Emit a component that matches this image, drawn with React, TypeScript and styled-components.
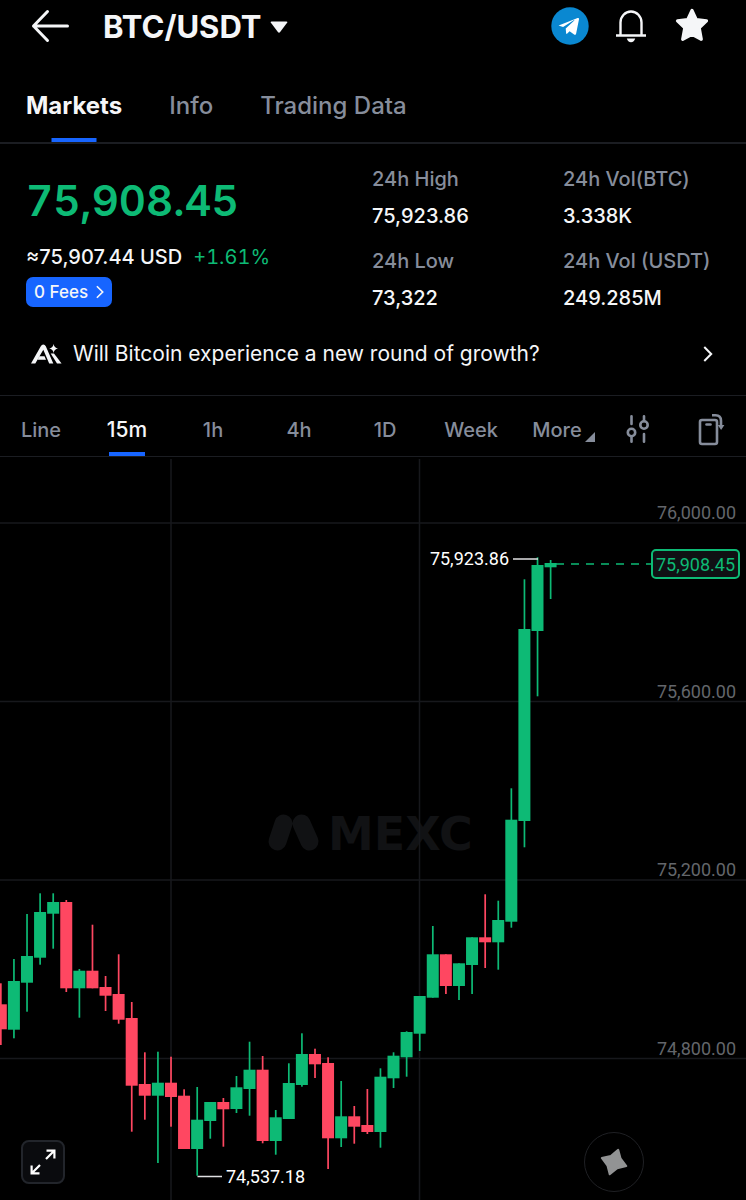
import React from 'react';
import styled, { createGlobalStyle, css } from 'styled-components';

const color = {
  text: '#f5f6f8',
  muted: '#868d9b',
  axis: '#63666b',
  up: '#0dba75',
  down: '#ff4761',
  blue: '#1765ff',
  line: '#1b1d22',
};

const GlobalStyle = createGlobalStyle`
  * { box-sizing: border-box; }
  body {
    margin: 0;
    background: #000;
    color: ${color.text};
    font-family: Inter, "Liberation Sans", sans-serif;
  }
  button { font: inherit; color: inherit; background: none; border: 0; padding: 0; cursor: pointer; }
  a { color: inherit; text-decoration: none; }
  svg { display: block; }
`;

const Page = styled.main`
  width: 100%;
  overflow: hidden;
`;

const Header = styled.header`
  display: flex;
  align-items: center;
  height: 52px;
  padding: 0 35px 0 31px;
`;

const PairButton = styled.button`
  display: flex;
  align-items: center;
  gap: 8px;
  margin-left: 33px;
  padding-top: 2px;
`;

const PairName = styled.h1`
  margin: 0;
  font-size: 31px;
  line-height: 40px;
  font-weight: 700;
`;

const HeaderActions = styled.div`
  display: flex;
  align-items: center;
  gap: 26px;
  margin-left: auto;
`;

const Tabs = styled.nav`
  display: flex;
  gap: 47px;
  height: 92px;
  padding: 0 26px;
  border-bottom: 2px solid ${color.line};
`;

const underline = css<{ $width: number }>`
  &::after {
    content: '';
    position: absolute;
    left: 50%;
    bottom: 0;
    width: ${(p) => p.$width}px;
    height: 4px;
    transform: translateX(-50%);
    background: ${color.blue};
  }
`;

const Tab = styled.button<{ $active?: boolean; $width: number }>`
  position: relative;
  padding-bottom: 14px;
  padding-top: 32px;
  font-size: 24px;
  line-height: 44px;
  white-space: nowrap;
  font-weight: ${(p) => (p.$active ? 700 : 500)};
  color: ${(p) => (p.$active ? color.text : color.muted)};
  ${(p) => p.$active && underline}
`;

const Summary = styled.section`
  border-bottom: 1px solid ${color.line};
`;

const Figures = styled.div`
  display: grid;
  grid-template-columns: 346fr 348fr;
  padding: 23px 26px 0;
`;

const Price = styled.div`
  margin-top: 7px;
  font-size: 42px;
  line-height: 54px;
  font-weight: 600;
  font-variant-numeric: tabular-nums;
  color: ${color.up};
`;

const Converted = styled.div`
  display: flex;
  gap: 11px;
  margin-top: 17px;
  font-size: 20px;
  line-height: 24px;
  font-weight: 500;
  white-space: nowrap;
`;

const Change = styled.span`
  color: ${color.up};
  font-weight: 400;
  font-variant-numeric: tabular-nums;
`;

const FeesButton = styled.button`
  display: flex;
  align-items: center;
  gap: 8px;
  height: 30px;
  margin-top: 8px;
  padding: 0 8px;
  border-radius: 7px;
  background: ${color.blue};
  font-size: 17px;
  line-height: 24px;
  font-weight: 500;
`;

const Stats = styled.dl`
  display: grid;
  grid-template-columns: 191fr 157fr;
  row-gap: 21px;
  margin: 0;
`;

const Stat = styled.div`
  font-size: 20px;
  line-height: 24px;
  font-weight: 500;
  white-space: nowrap;
`;

const StatLabel = styled.dt`
  color: ${color.muted};
  margin-bottom: 13px;
`;

const StatValue = styled.dd`
  margin: 0;
`;

const PromptLink = styled.a`
  display: flex;
  align-items: center;
  gap: 11px;
  height: 48px;
  margin: 20px 0 17px;
  padding: 0 33px 0 31px;
  font-size: 21px;
  line-height: 24px;

  svg:last-child { margin-left: auto; }
`;

const Toolbar = styled.div`
  display: grid;
  grid-template-columns: repeat(7, 86fr) 76fr 70fr;
  height: 61px;
  margin-left: -2px;
  border-bottom: 1px solid ${color.line};
`;

const Period = styled.button<{ $active?: boolean; $width: number }>`
  position: relative;
  padding-bottom: 4px;
  padding-top: 12px;
  font-size: ${(p) => (p.$active ? 21 : 20)}px;
  line-height: 24px;
  font-weight: 500;
  color: ${(p) => (p.$active ? color.text : color.muted)};
  ${(p) => p.$active && underline}
`;

const MoreMark = styled.svg`
  position: absolute;
  right: 5px;
  bottom: 14px;
`;

const ToolButton = styled.button`
  display: grid;
  place-items: center;
  padding-top: 6px;
  color: ${color.muted};
`;

const ChartArea = styled.section`
  position: relative;
  padding-top: 1px;
`;

const ChartSvg = styled.svg`
  width: 100%;
  height: auto;
  font-family: Roboto, "Liberation Sans", sans-serif;
  font-size: 18px;
`;

const ExpandButton = styled.button`
  position: absolute;
  left: 21px;
  bottom: 16px;
  display: grid;
  place-items: center;
  width: 44px;
  height: 44px;
  border: 2px solid #22252b;
  border-radius: 8px;
  background: #0a0b0e;
`;

const AssistButton = styled.button`
  position: absolute;
  right: 102px;
  bottom: 8px;
  display: grid;
  place-items: center;
  width: 60px;
  height: 60px;
  border: 1px solid #1f2024;
  border-radius: 50%;
  background: #000;
`;

const BackIcon = () => (
  <svg width="39" height="36" viewBox="0 0 39 36" fill="none" stroke={color.text} strokeWidth="3" strokeLinecap="round" strokeLinejoin="round">
    <path d="M16.500 3.500 2.500 18 16.500 32.500M2.500 18H36.500" />
  </svg>
);

const CaretIcon = () => (
  <svg width="18" height="12" viewBox="0 0 18 12">
    <path d="M1.500.5h15q1.500 0 .6 1.200l-7 9.300q-1.100 1.300-2.200 0l-7-9.300Q0 .5 1.500.5Z" fill={color.text} />
  </svg>
);

const TelegramIcon = () => (
  <svg width="38" height="38" viewBox="0 0 38 38">
    <circle cx="19" cy="19" r="18.700" fill="#0a88d1" />
    <path d="M8.300 18.200 26.600 11q1.600-.5 1.400 1.200l-2.900 14.600q-.5 1.800-2 .8l-4.500-3.300-2.300 2.300q-1 .8-1.200-.6l-.4-4.600 8.600-7.900q.4-.7-.6-.3l-10.600 6.700-3.900-1.200q-1.200-.3.100-.5Z" fill="#fff" />
  </svg>
);

const BellIcon = () => (
  <svg width="32" height="36" viewBox="0 0 32 36" fill="none" stroke={color.text} strokeWidth="2.400">
    <path d="M5.500 27V14.500a10.500 11 0 0 1 21 0V27M1 27.500h30" />
    <path d="M11.800 30.600h8.400q-1 3.600-4.200 3.600t-4.200-3.600Z" fill={color.text} stroke="none" />
  </svg>
);

const StarIcon = () => (
  <svg width="38" height="38" viewBox="-2 -1 38 38">
    <path d="M17 2.500 21.300 11.600 31.500 12.900 24.200 19.900 26.300 31.300 17 26.300 7.700 31.300 9.800 19.900 2.500 12.900 12.700 11.600Z" fill={color.text} stroke={color.text} strokeWidth="3.200" strokeLinejoin="round" />
  </svg>
);

const ChevronIcon = ({ size }: { size: number }) => (
  <svg width={Math.round(size * 0.6)} height={size} viewBox="0 0 9 15" fill="none" stroke={color.text} strokeWidth="1.900">
    <path d="M1 1 7.500 7.500 1 14" />
  </svg>
);

const AiIcon = () => (
  <svg width="31" height="20" viewBox="0 0 31 20" fill={color.text}>
    <path d="M0 19.500 9.800 2.200Q10.700.6 12.300.6T14.800 2.200L22.300 19.500H18.200L12.300 5.800 4.300 19.500ZM8.600 12.200H13.500L15 15.700H6.600Z" />
    <path d="M19.700 9.600H23L30.600 19.500H26Z" />
    <path d="M22.600 0Q23.200 3.800 27 4.500 23.200 5.200 22.600 9 22 5.200 18.200 4.500 22 3.800 22.600 0Z" />
  </svg>
);

const SlidersIcon = () => (
  <svg width="24" height="30" viewBox="0 0 24 30" fill="none" stroke="currentColor" strokeWidth="2.600" strokeLinecap="round">
    <circle cx="5.500" cy="18.500" r="3.700" />
    <circle cx="18" cy="11" r="3.700" />
    <path d="M5.500 2.200V10M5.500 22.500V27.800M18 2.200V7M18 20V27.800" />
  </svg>
);

const RotateIcon = () => (
  <svg width="27" height="33" viewBox="0 0 27 33" fill="none" stroke="currentColor" strokeWidth="2.600">
    <rect x="2" y="7" width="17" height="24" rx="2" />
    <path d="M8.500 11.500h4" strokeLinecap="round" />
    <path d="M14 2.200h3.500q5.500 0 5.500 5.500V13" />
    <path d="M19.800 12h6.600L23.100 17Z" fill="currentColor" stroke="none" />
  </svg>
);

const ExpandIcon = () => (
  <svg width="26" height="26" viewBox="0 0 26 26" fill="none" stroke="#fff" strokeWidth="2.200">
    <path d="M16 10 24.200 1.800M16.500 1.600H24.400V9.500M10 16 1.800 24.200M1.600 16.500V24.400H9.500" />
  </svg>
);

const CompassStarIcon = () => (
  <svg width="30" height="30" viewBox="0 0 30 30">
    <path d="M19.200 2.800 21.500 11.300 27.300 19 18.200 21.200 10.700 27.300 8.500 18.700 2.800 11 11.800 9Z" fill="#929394" stroke="#929394" strokeWidth="2" strokeLinejoin="round" />
  </svg>
);

type Candle = [up: 0 | 1, top: number, bottom: number, high: number, low: number];

const candles: Candle[] = [
  [0, 1004.3, 1029.3, 983.3, 1045],
  [1, 981, 1029.7, 959, 1038.3],
  [1, 956, 982.7, 914, 1011.7],
  [1, 912, 957.7, 893.3, 964.7],
  [1, 902, 913.7, 893.3, 948.7],
  [0, 902, 988.3, 900, 992],
  [1, 970.7, 988.3, 969, 1017.7],
  [0, 970.7, 988.3, 924.7, 988.3],
  [0, 987, 995.7, 976, 1011],
  [0, 994, 1019.7, 954.3, 1023.7],
  [0, 1018, 1085.7, 1002, 1131.7],
  [0, 1084, 1095.7, 1052.3, 1119.7],
  [1, 1082.7, 1095.7, 1051.7, 1163],
  [0, 1082.7, 1097, 1056.7, 1126.7],
  [0, 1095.7, 1149, 1089.3, 1149],
  [1, 1119.7, 1149, 1087, 1175.7],
  [1, 1102, 1121, 1102, 1138.7],
  [0, 1102, 1109.3, 1098, 1146.7],
  [1, 1087.3, 1109, 1076, 1113],
  [1, 1069.7, 1089, 1041.7, 1115.7],
  [0, 1069.7, 1141, 1056, 1143.3],
  [1, 1117.3, 1141, 1110, 1154.7],
  [1, 1083, 1119, 1063.3, 1119],
  [1, 1054, 1085, 1033.3, 1086.7],
  [0, 1054, 1064.3, 1048.7, 1078],
  [0, 1063, 1138.3, 1057.3, 1169],
  [1, 1116.3, 1138.3, 1081, 1147],
  [0, 1116.3, 1126.7, 1106, 1143.7],
  [0, 1125, 1132, 1089, 1134],
  [1, 1076.7, 1132, 1068.3, 1147.7],
  [1, 1055.7, 1078.3, 1052.3, 1088],
  [1, 1032, 1057.3, 1031.3, 1076.7],
  [1, 996, 1033.7, 996, 1051],
  [1, 954.3, 997.7, 926, 997.7],
  [0, 954.3, 986, 954.3, 994],
  [1, 963.3, 986, 963.3, 1000],
  [1, 937.3, 965, 937.3, 994],
  [0, 937.3, 942.3, 894.3, 968],
  [1, 920, 942.3, 900.7, 969.7],
  [1, 819.7, 921.7, 788.3, 927.7],
  [1, 629, 821, 579.3, 847.3],
  [1, 565, 631, 557.3, 696.3],
  [1, 563, 567.3, 560, 599],
];

const gridRows = [
  { y: 523, label: '76,000.00' },
  { y: 701.5, label: '75,600.00' },
  { y: 880, label: '75,200.00' },
  { y: 1058.5, label: '74,800.00' },
];

const gridColumns = [171, 419.5];

const periods = ['Line', '15m', '1h', '4h', '1D', 'Week'];

const stats = [
  ['24h High', '75,923.86'],
  ['24h Vol(BTC)', '3.338K'],
  ['24h Low', '73,322'],
  ['24h Vol (USDT)', '249.285M'],
];

const CandleChart = () => (
  <ChartSvg viewBox="0 458 746 742" role="img" aria-label="BTC/USDT 15 minute candles">
    <g fill="#111214">
      <path d="M283.500 823.500 277.500 841.500M301.500 823.500 309.500 841.500" stroke="#111214" strokeWidth="18" strokeLinecap="round" />
      <text x="328" y="850" fontFamily="DejaVu Sans" fontWeight="700" fontSize="46">MEXC</text>
    </g>
    <g stroke="#17181c" strokeWidth="1.500">
      {gridRows.map((row) => <line key={row.y} x1="0" x2="746" y1={row.y} y2={row.y} />)}
      {gridColumns.map((x) => <line key={x} x1={x} x2={x} y1="459" y2="1200" />)}
    </g>
    <g fill={color.axis} textAnchor="end">
      {gridRows.map((row) => <text key={row.y} x="736" y={row.y - 4}>{row.label}</text>)}
    </g>
    {candles.map(([up, top, bottom, high, low], i) => {
      const x = 0.8 + i * 13.09;
      return (
        <g key={i} fill={up ? color.up : color.down}>
          <rect x={x - 0.8} y={high} width="1.700" height={low - high} />
          <rect x={x - 6} y={top} width="12" height={bottom - top} />
        </g>
      );
    })}
    <path d="M513 559H538M197.500 1176.500H222" stroke="#dfe0e2" strokeWidth="1.600" />
    <g fill="#fff">
      <text x="509" y="565" textAnchor="end">75,923.86</text>
      <text x="226" y="1183">74,537.18</text>
    </g>
    <path d="M556 564H651" stroke={color.up} strokeWidth="1.500" strokeDasharray="8 7" />
    <rect x="652" y="550" width="87" height="28" rx="4" fill="#101114" stroke={color.up} strokeWidth="2" />
    <text x="695.500" y="571" textAnchor="middle" fill={color.up}>75,908.45</text>
  </ChartSvg>
);

export default function App() {
  return (
    <Page>
      <GlobalStyle />
      <Header>
        <button aria-label="Back"><BackIcon /></button>
        <PairButton>
          <PairName>BTC/USDT</PairName>
          <CaretIcon />
        </PairButton>
        <HeaderActions>
          <button aria-label="Telegram"><TelegramIcon /></button>
          <button aria-label="Price alerts"><BellIcon /></button>
          <button aria-label="Favorite"><StarIcon /></button>
        </HeaderActions>
      </Header>
      <Tabs>
        <Tab $active $width={45}>Markets</Tab>
        <Tab $width={45}>Info</Tab>
        <Tab $width={45}>Trading Data</Tab>
      </Tabs>
      <Summary>
        <Figures>
          <div>
            <Price>75,908.45</Price>
            <Converted>
              <span>≈75,907.44 USD</span>
              <Change>+1.61%</Change>
            </Converted>
            <FeesButton>0 Fees <ChevronIcon size={14} /></FeesButton>
          </div>
          <Stats>
            {stats.map(([label, value]) => (
              <Stat key={label}>
                <StatLabel>{label}</StatLabel>
                <StatValue>{value}</StatValue>
              </Stat>
            ))}
          </Stats>
        </Figures>
        <PromptLink href="#ai">
          <AiIcon />
          <span>Will Bitcoin experience a new round of growth?</span>
          <ChevronIcon size={16} />
        </PromptLink>
      </Summary>
      <Toolbar>
        {periods.map((label) => (
          <Period key={label} $active={label === '15m'} $width={36}>{label}</Period>
        ))}
        <Period $width={36}>
          More
          <MoreMark width="10" height="10" viewBox="0 0 10 10"><path d="M10 0V10H0Z" fill={color.muted} /></MoreMark>
        </Period>
        <ToolButton aria-label="Indicators"><SlidersIcon /></ToolButton>
        <ToolButton aria-label="Rotate chart"><RotateIcon /></ToolButton>
      </Toolbar>
      <ChartArea>
        <CandleChart />
        <ExpandButton aria-label="Expand chart"><ExpandIcon /></ExpandButton>
        <AssistButton aria-label="Assistant"><CompassStarIcon /></AssistButton>
      </ChartArea>
    </Page>
  );
}
